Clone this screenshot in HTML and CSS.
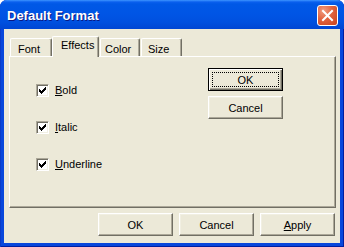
FILE: index.html
```html
<!DOCTYPE html>
<html lang="en">
<head>
  <meta charset="UTF-8" />
  <title>Default Format</title>
  <link rel="stylesheet" href="styles.css">
</head>
<body>
  <div class="window">
    <div class="titlebar">
      <span class="title">Default Format</span>
      <span class="close">
        <svg width="19" height="19" viewBox="0 0 19 19">
          <path d="M5 5 L14 14 M14 5 L5 14" stroke="#fff" stroke-width="2" stroke-linecap="square" fill="none"/>
        </svg>
      </span>
    </div>

    <div class="client">
      <div class="tabs">
        <div class="tab tab-font">Font</div>
        <div class="tab tab-effects selected">Effects</div>
        <div class="tab tab-color">Color</div>
        <div class="tab tab-size">Size</div>
      </div>

      <div class="panel">
        <div class="checks">
          <label class="check">
            <span class="box">
              <svg width="11" height="11" viewBox="0 0 11 11" shape-rendering="crispEdges">
                <path d="M2 4h1v3h-1z M3 5h1v3h-1z M4 6h1v3h-1z M5 5h1v3h-1z M6 4h1v3h-1z M7 3h1v3h-1z M8 2h1v3h-1z" fill="#000"/>
              </svg>
            </span>
            <span class="label"><u>B</u>old</span>
          </label>
          <label class="check">
            <span class="box">
              <svg width="11" height="11" viewBox="0 0 11 11" shape-rendering="crispEdges">
                <path d="M2 4h1v3h-1z M3 5h1v3h-1z M4 6h1v3h-1z M5 5h1v3h-1z M6 4h1v3h-1z M7 3h1v3h-1z M8 2h1v3h-1z" fill="#000"/>
              </svg>
            </span>
            <span class="label"><u>I</u>talic</span>
          </label>
          <label class="check">
            <span class="box">
              <svg width="11" height="11" viewBox="0 0 11 11" shape-rendering="crispEdges">
                <path d="M2 4h1v3h-1z M3 5h1v3h-1z M4 6h1v3h-1z M5 5h1v3h-1z M6 4h1v3h-1z M7 3h1v3h-1z M8 2h1v3h-1z" fill="#000"/>
              </svg>
            </span>
            <span class="label"><u>U</u>nderline</span>
          </label>
        </div>

        <div class="side-buttons">
          <button class="btn default"><span class="focus">OK</span></button>
          <button class="btn">Cancel</button>
        </div>
      </div>

      <div class="buttons">
        <button class="btn">OK</button>
        <button class="btn">Cancel</button>
        <button class="btn"><u>A</u>pply</button>
      </div>
    </div>
  </div>
</body>
</html>
```

FILE: styles.css
```css
body { margin: 0; background: #fff; font-family: "Liberation Sans", Arial, sans-serif; }

.window { width: 344px; height: 247px; display: flex; flex-direction: column; background: #0847DC; border-radius: 7px 7px 0 0; box-shadow: inset 1px 0 #0A3BC8, inset -1px 0 #001EA0, inset 0 -1px #001EA0; }

.titlebar { height: 29px; display: flex; align-items: flex-start; border-radius: 7px 7px 0 0;
  background: linear-gradient(to bottom, #3D95FF 0, #0A5FEE 2px, #0058E6 4px, #0055E5 14px, #0050DF 22px, #0046D3 29px); }
.title { margin: 8px 0 0 7px; color: #fff; font-size: 13px; font-weight: bold; line-height: 16px; text-shadow: 1px 1px #0A1883; }
.close { margin: 5px 6px 0 auto; width: 19px; height: 19px; border: 1px solid #fff; border-radius: 3px; display: flex;
  background: radial-gradient(circle at 30% 25%, #F09C80 0, #E2633F 45%, #C8421B 100%); }

.client { flex: 1; margin: 0 4px 4px; background: #ECE9D8; padding: 7px 4px 0 5px; display: flex; flex-direction: column; }

.tabs { height: 20px; display: flex; align-items: flex-end; margin-left: 1px; position: relative; z-index: 1; }
.tab { height: 18px; box-sizing: border-box; padding: 2px 0 0 7px; font-size: 11px; line-height: 16px; color: #000;
  border-top: 1px solid #fff; border-left: 1px solid #fff; border-right: 1px solid #716F64; border-radius: 2px 2px 0 0;
  box-shadow: inset -1px 0 #ACA899; }
.tab-font { width: 42px; }
.tab-effects { width: 47px; }
.tab-color { width: 40px; margin-left: 1px; padding-left: 4px; }
.tab-size { width: 41px; margin-left: 1px; padding-left: 6px; }
.tab.selected { height: 21px; margin-bottom: -1px; padding: 0 0 0 8px; background: #ECE9D8; line-height: 16px; }

.panel { width: 327px; height: 152px; box-sizing: border-box; display: flex;
  border-top: 1px solid #fff; border-left: 1px solid #fff; border-right: 1px solid #716F64; border-bottom: 1px solid #716F64;
  box-shadow: inset -1px -1px #ACA899; }

.checks { display: flex; flex-direction: column; gap: 24px; padding: 27px 0 0 26px; }
.check { display: flex; align-items: center; height: 13px; font-size: 11px; color: #000; }
.box { width: 11px; height: 11px; border: 1px solid; border-color: #ACA899 #fff #fff #ACA899; background: #fff;
  box-shadow: inset 1px 1px #716F64, inset -1px -1px #F1EFE2; display: flex; }
.label { margin-left: 6px; line-height: 13px; }

.side-buttons { margin: 11px 52px 0 auto; display: flex; flex-direction: column; gap: 5px; }

.btn { width: 75px; height: 23px; box-sizing: border-box; padding: 0; background: #ECE9D8; color: #000;
  font-family: "Liberation Sans", Arial, sans-serif; font-size: 11px;
  border: 1px solid; border-color: #fff #716F64 #716F64 #fff;
  box-shadow: inset -1px -1px #ACA899, inset 1px 1px #F1EFE2; }
.btn.default { border-color: #000; display: flex; padding: 3px;
  box-shadow: inset 1px 1px #fff, inset -1px -1px #716F64, inset -2px -2px #ACA899; }
.focus { flex: 1; border: 1px dotted #000; display: flex; align-items: center; justify-content: center; }

.buttons { display: flex; justify-content: flex-end; gap: 6px; margin: 5px 1px 0 0; }
```
